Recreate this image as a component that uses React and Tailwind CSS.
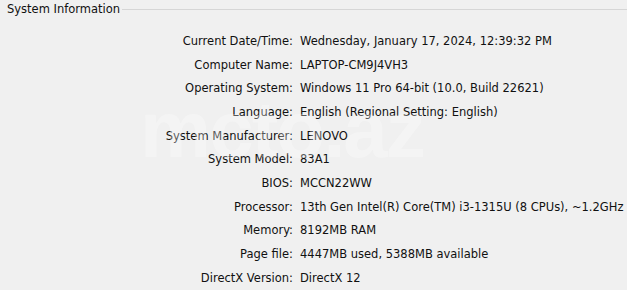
import React from "react";

const rows = [
  ["Current Date/Time:", "Wednesday, January 17, 2024, 12:39:32 PM"],
  ["Computer Name:", "LAPTOP-CM9J4VH3"],
  ["Operating System:", "Windows 11 Pro 64-bit (10.0, Build 22621)"],
  ["Language:", "English (Regional Setting: English)"],
  ["System Manufacturer:", "LENOVO"],
  ["System Model:", "83A1"],
  ["BIOS:", "MCCN22WW"],
  ["Processor:", "13th Gen Intel(R) Core(TM) i3-1315U (8 CPUs), ~1.2GHz"],
  ["Memory:", "8192MB RAM"],
  ["Page file:", "4447MB used, 5388MB available"],
  ["DirectX Version:", "DirectX 12"],
];

export default function App() {
  return (
    <div
      className="relative w-[627px] h-[290px] overflow-hidden bg-[#f0f0f0] text-[#111] text-[11.5px]"
      style={{ fontFamily: '"DejaVu Sans", sans-serif' }}
    >
      <div className="flex items-center h-[19px] pl-[7px]">
        <span className="leading-[19px]">System Information</span>
        <div className="flex-1 ml-[2px] h-[2px] border-t border-[#d6d6d6] border-b-white" />
      </div>
      <div className="grid grid-cols-[297px_1fr] auto-rows-[23.67px] mt-[11px]">
        {rows.map(([k, v]) => (
          <React.Fragment key={k}>
            <div className="text-right leading-[23.67px] pr-[4px] whitespace-nowrap">{k}</div>
            <div className="leading-[23.67px] pl-[3px] whitespace-nowrap">{v}</div>
          </React.Fragment>
        ))}
      </div>
      <div
        className="pointer-events-none absolute left-[140px] top-[90px] text-[80px] font-bold leading-none text-white opacity-30 tracking-[-2px]"
        style={{ fontFamily: '"Liberation Sans", sans-serif' }}
      >
        mcto.az
      </div>
    </div>
  );
}
